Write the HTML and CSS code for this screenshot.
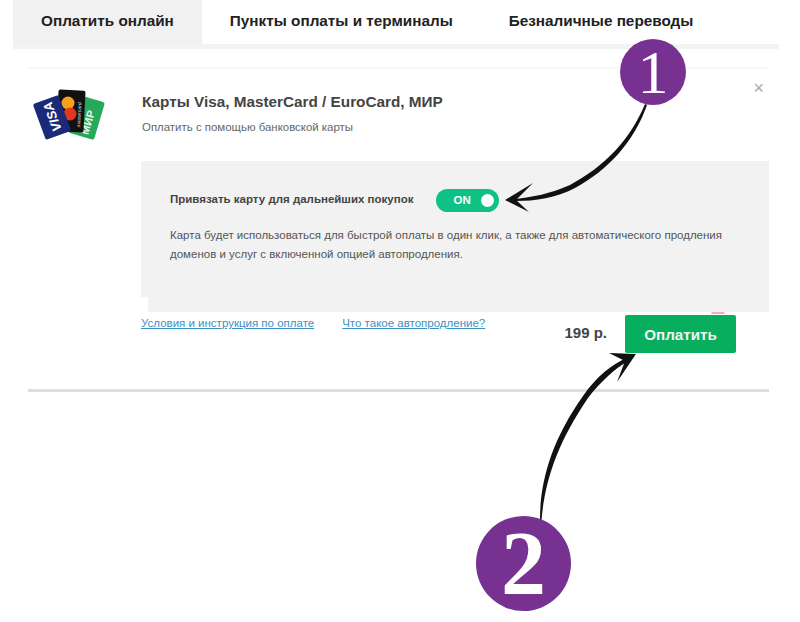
FILE: index.html
```html
<!DOCTYPE html>
<html lang="ru">

<head>
  <meta charset="UTF-8" />
  <meta name="viewport" content="width=device-width, initial-scale=1.0" />
  <title>Оплата</title>
  <link rel="stylesheet" href="styles.css">
</head>

<body>
  <div class="tabs">
    <a href="#" class="tab tab-active">Оплатить онлайн</a>
    <a href="#" class="tab">Пункты оплаты и терминалы</a>
    <a href="#" class="tab">Безналичные переводы</a>
  </div>

  <div class="pay-card">
    <span class="close">&times;</span>

    <div class="pay-head">
      <svg class="card-logos" width="74" height="54" viewBox="0 0 74 54">
        <g transform="rotate(16.5 54.5 30.5)">
          <rect x="41" y="11" width="27" height="39" rx="2" fill="#25a95b" />
          <text class="logo-mir" transform="translate(61 47) rotate(-90)">МИР</text>
        </g>
        <g transform="rotate(3 39 24)">
          <rect x="25.5" y="3" width="27" height="42" rx="2" fill="#111" />
          <text class="logo-mc" transform="translate(49 40) rotate(-90)">mastercard</text>
        </g>
        <circle cx="36" cy="16" r="6.5" fill="#f6a11d" />
        <circle cx="38" cy="27" r="6.5" fill="#e2381f" />
        <g transform="rotate(-20 20 30.5)">
          <rect x="6.5" y="11.5" width="27" height="38" rx="2" fill="#1b2a78" />
          <text class="logo-visa" transform="translate(25 45) rotate(-90)">VISA</text>
        </g>
      </svg>
      <div class="pay-title">
        <h3>Карты Visa, MasterCard / EuroCard, МИР</h3>
        <p>Оплатить с помощью банковской карты</p>
      </div>
    </div>

    <div class="pay-body">
      <div class="panel">
        <div class="panel-row">
          <span class="panel-label">Привязать карту для дальнейших покупок</span>
          <span class="switch">ON<i class="switch-knob"></i></span>
        </div>
        <p class="panel-text">Карта будет использоваться для быстрой оплаты в один клик, а также для автоматического продления доменов и услуг с включенной опцией автопродления.</p>
      </div>

      <div class="pay-footer">
        <a href="#" class="link">Условия и инструкция по оплате</a>
        <a href="#" class="link">Что такое автопродление?</a>
        <span class="price">199 р.</span>
        <button type="button" class="pay-btn">Оплатить</button>
      </div>
    </div>
  </div>

  <!-- numbered arrows drawn over the page -->
  <svg class="notes" width="800" height="622" viewBox="0 0 800 622">
    <path d="M645 104C630 140 605 166 570 185C550 194 532 197 515 199L516 201C535 201 556 198 575 188C608 170 634 142 647 105Z" fill="#111" />
    <path d="M505 200L533 183L516 200L529 212Z" fill="#111" />
    <path d="M540 520C540 480 552 440 583 396C597 376 612 364 627 358L628 361C616 368 601 381 588 398C558 442 545 480 541.5 520Z" fill="#111" />
    <path d="M636 354L609 353L625 361L617 382Z" fill="#111" />
  </svg>
  <div class="badge badge-one">1</div>
  <div class="badge badge-two">2</div>
</body>

</html>
```

FILE: styles.css
```css
* {
  margin: 0;
  padding: 0;
  box-sizing: border-box;
  font-family: "Liberation Sans", Arial, sans-serif;
}

body {
  position: relative;
  width: 800px;
  height: 622px;
  overflow: hidden;
  background: #fff;
}

.tabs {
  display: flex;
  height: 49px;
  margin: 0 21px 0 13px;
  border-bottom: 5px solid #f3f3f3;
}

.tab {
  padding: 0 28px;
  line-height: 42px;
  color: #222;
  font-size: 15.3px;
  font-weight: 700;
  text-decoration: none;
}

.tab-active {
  background: #f1f1f1;
}

.pay-card {
  position: relative;
  height: 325px;
  margin: 18px 31px 0 28px;
  border-top: 2px solid #f7f7f7;
  border-bottom: 3px solid #dedede;
}

/* stray mark above the pay button */
.pay-card::after {
  content: "";
  position: absolute;
  top: 243px;
  left: 683px;
  width: 14px;
  height: 2px;
  border-radius: 7px 7px 0 0;
  background: #e6b5ae;
}

.close {
  position: absolute;
  top: 9px;
  right: 5px;
  color: #a8a8a8;
  font-size: 18px;
  line-height: 20px;
}

.pay-head {
  display: flex;
  height: 92px;
  padding-top: 18px;
}

.card-logos {
  flex: none;
  margin-left: 4px;
}

.logo-visa {
  fill: #fff;
  font-size: 13px;
  font-weight: 700;
  font-style: italic;
}

.logo-mir {
  fill: #e8f6ee;
  font-size: 11px;
  font-weight: 700;
}

.logo-mc {
  fill: #ddd;
  font-size: 5px;
}

.pay-title {
  margin-left: 36px;
  padding-top: 7px;
}

.pay-title h3 {
  color: #444;
  font-size: 15.3px;
  font-weight: 700;
  line-height: 16px;
}

.pay-title p {
  margin-top: 10px;
  color: #666;
  font-size: 11.45px;
  line-height: 14px;
}

.pay-body {
  margin-left: 113px;
}

.panel {
  position: relative;
  height: 151px;
  padding: 28px 40px 0 29px;
  background: #f2f2f2;
}

/* chipped corner of the grey block */
.panel::after {
  content: "";
  position: absolute;
  left: 0;
  bottom: 0;
  width: 7px;
  height: 15px;
  background: #fff;
}

.panel-row {
  display: flex;
  align-items: center;
  gap: 23px;
}

.panel-label {
  padding-bottom: 3px;
  color: #444;
  font-size: 11.5px;
  font-weight: 700;
}

.switch {
  position: relative;
  width: 63px;
  height: 23px;
  padding-left: 17px;
  border-radius: 12px;
  background: #0fc185;
  color: #fff;
  font-size: 11.5px;
  font-weight: 700;
  line-height: 23px;
}

.switch-knob {
  position: absolute;
  top: 5px;
  right: 5px;
  width: 13px;
  height: 13px;
  border-radius: 50%;
  background: #fff;
}

.panel-text {
  margin-top: 14px;
  color: #555;
  font-size: 11.5px;
  line-height: 18.5px;
}

.pay-footer {
  display: flex;
  align-items: flex-start;
  padding-top: 3px;
}

.link {
  margin-right: 28px;
  padding-top: 2px;
  color: #3d90c4;
  font-size: 11.5px;
}

.price {
  margin-left: auto;
  padding-top: 9px;
  color: #444;
  font-size: 15px;
  font-weight: 700;
}

.pay-btn {
  width: 111px;
  height: 38px;
  margin: 0 33px 0 18px;
  border: none;
  border-radius: 2px;
  background: #06ae5d;
  color: #f2f2f2;
  font-size: 15.2px;
  font-weight: 700;
}

.notes {
  position: absolute;
  top: 0;
  left: 0;
}

.badge {
  position: absolute;
  border-radius: 50%;
  background: #773291;
  color: #fff;
  font-family: "Liberation Serif", "Times New Roman", serif;
  text-align: center;
}

.badge-one {
  top: 39px;
  left: 620px;
  width: 66px;
  height: 66px;
  font-size: 62px;
  line-height: 66px;
}

.badge-two {
  top: 516px;
  left: 476px;
  width: 95px;
  height: 95px;
  font-size: 90px;
  font-weight: 700;
  line-height: 95px;
}
```
